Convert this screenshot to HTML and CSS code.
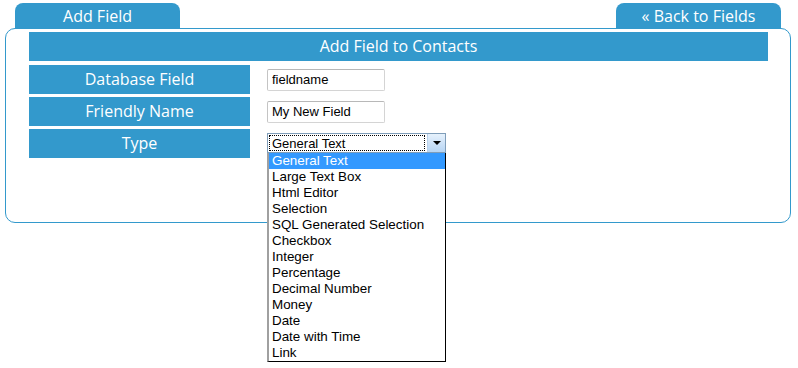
FILE: index.html
```html
<!DOCTYPE html>
<html lang="en">
<head>
  <meta charset="UTF-8">
  <title>Add Field</title>
  <link rel="stylesheet" href="styles.css">
</head>
<body>
  <div class="tabs">
    <div class="tab">Add Field</div>
    <div class="tab">&#171; Back to Fields</div>
  </div>
  <div class="panel">
    <div class="panel-title">Add Field to Contacts</div>
    <div class="row">
      <div class="row-label">Database Field</div>
      <input class="text-input" type="text" value="fieldname">
    </div>
    <div class="row">
      <div class="row-label">Friendly Name</div>
      <input class="text-input" type="text" value="My New Field">
    </div>
    <div class="row">
      <div class="row-label">Type</div>
      <div class="select-wrap">
        <div class="select-box">
          <span class="select-value">General Text</span>
          <span class="select-btn"></span>
        </div>
        <ul class="select-list">
          <li class="selected">General Text</li>
          <li>Large Text Box</li>
          <li>Html Editor</li>
          <li>Selection</li>
          <li>SQL Generated Selection</li>
          <li>Checkbox</li>
          <li>Integer</li>
          <li>Percentage</li>
          <li>Decimal Number</li>
          <li>Money</li>
          <li>Date</li>
          <li>Date with Time</li>
          <li>Link</li>
        </ul>
      </div>
    </div>
  </div>
</body>
</html>
```

FILE: styles.css
```css
html, body {
  min-height: 368px;
}
body {
  margin: 0;
  padding: 0;
  background: #fff;
  font-family: 'Open Sans', 'DejaVu Sans', sans-serif;
}
.tabs {
  display: flex;
  justify-content: space-between;
  padding: 3px 17px 0 15px;
}
.tab {
  width: 165px;
  height: 25px;
  line-height: 26px;
  background: #3399cc;
  color: #fff;
  font-size: 16px;
  text-align: center;
  border-radius: 8px 8px 0 0;
}
.panel {
  position: relative;
  margin: 0 7px 0 5px;
  height: 190px;
  border: 1px solid #3399cc;
  border-radius: 10px;
  padding: 3px 22px 0 23px;
  overflow: visible;
}
.panel-title {
  height: 29px;
  line-height: 29px;
  background: #3399cc;
  color: #fff;
  font-size: 16px;
  text-align: center;
  margin-bottom: 4px;
}
.row {
  display: flex;
  align-items: center;
  gap: 17px;
  height: 29px;
  margin-bottom: 3px;
}
.row-label {
  width: 221px;
  height: 29px;
  line-height: 29px;
  background: #3399cc;
  color: #fff;
  font-size: 16px;
  text-align: center;
}
.text-input {
  width: 118px;
  height: 22px;
  box-sizing: border-box;
  margin: 0;
  padding: 0 4px;
  border: 1px solid #d4d4d4;
  border-top-color: #b8b8b8;
  border-left-color: #c4c4c4;
  border-radius: 2px;
  font-family: 'Liberation Sans', Arial, sans-serif;
  font-size: 13px;
  color: #000;
  background: #fff;
  outline: none;
}
.select-wrap {
  position: relative;
  margin-top: -1px;
}
.select-box {
  width: 179px;
  height: 20px;
  box-sizing: border-box;
  border: 1px solid #7f9db9;
  display: flex;
  background: #fff;
  font-family: 'Liberation Sans', Arial, sans-serif;
  font-size: 13px;
}
.select-value {
  flex: 1;
  margin: 1px;
  padding-left: 2px;
  line-height: 16px;
  border: 1px dotted #000;
}
.select-btn {
  width: 17px;
  margin: 0 0 0 1px;
  border-left: 1px solid #b9d1ea;
  background: linear-gradient(#e6f1fc, #b7d5f4);
  position: relative;
}
.select-btn::after {
  content: "";
  position: absolute;
  left: 5px;
  top: 7px;
  border-left: 4px solid transparent;
  border-right: 4px solid transparent;
  border-top: 4px solid #000;
}
.select-list {
  position: absolute;
  left: 0;
  top: 20px;
  width: 179px;
  box-sizing: border-box;
  margin: 0;
  padding: 0;
  list-style: none;
  background: #fff;
  border: 1px solid #000;
  border-top: none;
  border-left: 2px solid #a0a0a0;
  font-family: 'Liberation Sans', Arial, sans-serif;
  font-size: 13.4px;
}
.select-list li {
  height: 16px;
  line-height: 16px;
  padding-left: 3px;
  color: #000;
  white-space: nowrap;
}
.select-list li.selected {
  background: #3399ff;
  color: #fff;
}
```
